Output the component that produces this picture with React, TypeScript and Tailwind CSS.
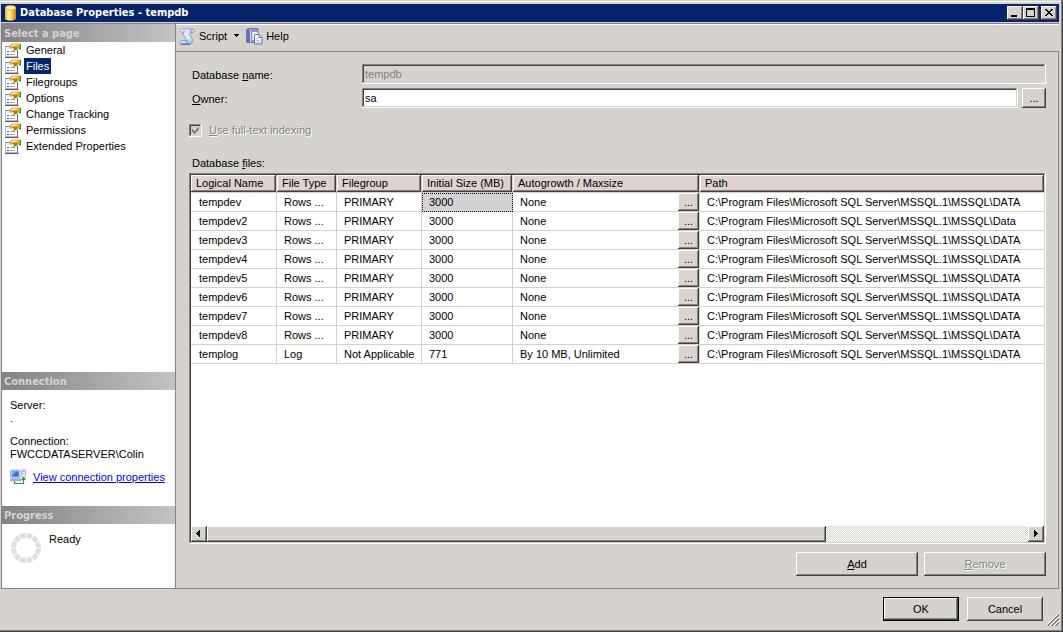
import React from 'react';

const RAISED =
  'bg-[#d6d3ce] shadow-[inset_-1px_-1px_0_#424142,inset_1px_1px_0_#ffffff,inset_-2px_-2px_0_#848284]';
const SUNKEN =
  'shadow-[inset_-1px_-1px_0_#ffffff,inset_1px_1px_0_#848284,inset_-2px_-2px_0_#d6d3ce,inset_2px_2px_0_#424142]';
const DISABLED_TEXT = 'text-[#848284] [text-shadow:1px_1px_0_#ffffff]';

const pages = [
  'General',
  'Files',
  'Filegroups',
  'Options',
  'Change Tracking',
  'Permissions',
  'Extended Properties',
];

type FileRow = {
  name: string;
  type: string;
  group: string;
  size: string;
  growth: string;
  path: string;
};

const DATA_PATH = 'C:\\Program Files\\Microsoft SQL Server\\MSSQL.1\\MSSQL\\DATA';

const dataRow = (name: string, path: string = DATA_PATH): FileRow => ({
  name,
  type: 'Rows ...',
  group: 'PRIMARY',
  size: '3000',
  growth: 'None',
  path,
});

const files: FileRow[] = [
  dataRow('tempdev'),
  dataRow('tempdev2', 'C:\\Program Files\\Microsoft SQL Server\\MSSQL.1\\MSSQL\\Data'),
  dataRow('tempdev3'),
  dataRow('tempdev4'),
  dataRow('tempdev5'),
  dataRow('tempdev6'),
  dataRow('tempdev7'),
  dataRow('tempdev8'),
  {
    name: 'templog',
    type: 'Log',
    group: 'Not Applicable',
    size: '771',
    growth: 'By 10 MB, Unlimited',
    path: DATA_PATH,
  },
];

const columns = ['Logical Name', 'File Type', 'Filegroup', 'Initial Size (MB)', 'Autogrowth / Maxsize', 'Path'];

function DatabaseIcon() {
  return (
    <svg width="14" height="16" viewBox="0 0 14 16" aria-hidden="true">
      <defs>
        <linearGradient id="cylinder" x1="0" x2="1" y1="0" y2="0">
          <stop offset="0" stopColor="#f0b020" />
          <stop offset="0.35" stopColor="#fff3b0" />
          <stop offset="0.65" stopColor="#f8c840" />
          <stop offset="1" stopColor="#c88400" />
        </linearGradient>
      </defs>
      <path d="M1 2.8v10.400c0 1.300 2.500 2.400 5.500 2.400s5.500-1.100 5.500-2.400V2.800z" fill="url(#cylinder)" />
      <ellipse cx="6.500" cy="2.800" rx="5.200" ry="2.200" fill="#fff0b0" stroke="#e0a830" strokeWidth="0.8" />
    </svg>
  );
}

function PageIcon() {
  return (
    <svg width="17" height="16" viewBox="0 0 17 16" aria-hidden="true">
      <rect x="0.5" y="4.5" width="12" height="10" fill="#ffffff" stroke="#b8b8d0" />
      <path d="M0 15.500h13.500" stroke="#50507c" />
      <path d="M12.500 8v7" stroke="#6c6c94" />
      <path d="M0 4.500h5" stroke="#8c8cac" />
      <g shapeRendering="crispEdges">
        <path d="M2 9.500h2M2 12.500h2" stroke="#5858b0" />
        <path d="M5 9.500h5M5 12.500h5" stroke="#98a0dc" />
      </g>
      <path d="M12.500 2.500l3.500-1v6.500l-3-2z" fill="#2f9a58" />
      <path d="M4.500 6.500l1-3 2.500-2 4-.7 2.500 1 .3 3.200-1.800 2.500-1.500.3-1.500 1.500-1.200-.8-.6-2.500-1.700-.3z" fill="#f5b428" />
      <path d="M6 3.500l2.500-1.700 3.500-.5 1.500.7-3.500 1.500-1.500 1.500z" fill="#ffe28a" />
      <path d="M4.500 6.500l1-3 2.500-2" fill="none" stroke="#a88850" strokeWidth="0.7" />
      <path d="M7 6.500l2-2M8.500 8.500l4-3.500M9.500 5l2 2.500" stroke="#54431c" strokeWidth="0.9" />
    </svg>
  );
}

function ScriptIcon() {
  return (
    <svg width="17" height="17" viewBox="0 0 17 17" aria-hidden="true">
      <defs>
        <linearGradient id="scroll" x1="0" x2="1" y1="0" y2="1">
          <stop offset="0" stopColor="#f4f8ff" />
          <stop offset="1" stopColor="#a0bce8" />
        </linearGradient>
      </defs>
      <path
        d="M3 1h10.500c1.500 0 2 1 2 2s-1 1.500-2 1.500h-2c-1 2 .5 3.500 1.500 5.500.8 1.800.8 3.500-.2 5-.6.8-1.300 1-2.300 1H2.500C1.300 16 .7 15.200.7 14.200s.8-1.700 1.800-1.700H7C6.500 10 4.500 8 4.200 5.500L4 4.500C2.500 4.500 1.500 4 1.500 2.700 1.500 1.700 2 1 3 1z"
        fill="url(#scroll)"
        stroke="#8098c8"
        strokeWidth="0.8"
      />
      <path d="M4 4.500c1 0 1.300-.8 1-1.800M11.500 4.500c0-1.500.5-2.500 2-3M7 12.500c1.500.3 1.500 2 .5 3" fill="none" stroke="#5070a8" strokeWidth="0.9" />
      <path d="M6.500 6.500h3M7.500 8.500h3M8.500 10.500h3" stroke="#ffffff" />
      <path d="M1.500 16c3 .5 7 .4 10 0" fill="none" stroke="#3858a0" />
    </svg>
  );
}

function HelpIcon() {
  return (
    <svg width="17" height="17" viewBox="0 0 17 17" aria-hidden="true">
      <path d="M.5 1.500L2 .5h10v12l-1.500 2H.5z" fill="#8c98cc" stroke="#5c68a4" strokeWidth="0.8" />
      <path d="M1 2h3v12H1z" fill="#6470b0" />
      <path d="M4.500 2v12" stroke="#d8dcf4" />
      <path d="M6 3.500h4.500l2 2v7H6z" fill="#ffffff" stroke="#7890bc" strokeWidth="0.8" />
      <path d="M8.500 6.500H13l3 3v6.500H8.500z" fill="#f4f9ff" stroke="#4868a0" strokeWidth="0.9" />
      <path d="M13 6.500v3h3" fill="#b8d0f0" stroke="#4868a0" strokeWidth="0.8" />
      <path d="M10 10.500h2M10 12.500h4.500M10 14.300h4.500" stroke="#a0bce4" strokeWidth="0.9" />
    </svg>
  );
}

function ConnectionIcon() {
  return (
    <svg width="17" height="16" viewBox="0 0 17 16" aria-hidden="true">
      <rect x="0.500" y="1" width="9.500" height="8" rx="0.800" fill="#d4def4" stroke="#98a8d0" strokeWidth="0.9" />
      <rect x="1.800" y="2.300" width="7" height="5.400" fill="#2878e8" />
      <path d="M2 2.500h4.500L2 6.500z" fill="#70b4ff" />
      <path d="M1 10h9.500l1 1.800H.5z" fill="#b4bcd8" stroke="#8490b8" strokeWidth="0.7" />
      <rect x="11.500" y="0.500" width="4" height="8" rx="0.800" fill="#e8ecf8" stroke="#a8b0c8" strokeWidth="0.9" />
      <path d="M12.500 2.500h2M12.500 4.500h2" stroke="#8898b8" strokeWidth="0.8" />
      <path d="M4.500 12v2.500h9V10" fill="none" stroke="#2c9828" strokeWidth="1.200" />
      <path d="M13.500 7.500l2.500 3.500h-5z" fill="#2c9828" />
    </svg>
  );
}

function ProgressIcon() {
  return (
    <svg width="32" height="32" viewBox="0 0 32 32" aria-hidden="true">
      <circle
        cx="16"
        cy="16"
        r="12.500"
        fill="none"
        stroke="#dedbe2"
        strokeWidth="5"
        pathLength={120}
        strokeDasharray="8.400 1.600"
        strokeDashoffset="-0.800"
      />
    </svg>
  );
}

function SectionHeader({ children }: { children: React.ReactNode }) {
  return (
    <h2 className="h-[18px] shrink-0 bg-linear-to-r from-[#848284] to-[#c6c3c6] pl-0.5 font-['DejaVu_Sans_Condensed','DejaVu_Sans',sans-serif] text-[11px] leading-[19px] font-bold text-[#d6d3ce]">
      {children}
    </h2>
  );
}

function TitleBar() {
  return (
    <header className="flex h-[18px] shrink-0 items-center bg-[#08246b] pr-0.5 pl-[3px]">
      <DatabaseIcon />
      <h1 className="flex-1 pl-0.5 font-['DejaVu_Sans_Condensed','DejaVu_Sans',sans-serif] text-[11px] leading-[18px] font-bold text-white">
        Database Properties - tempdb
      </h1>
      <button type="button" aria-label="Minimize" className={`h-3.5 w-4 ${RAISED}`}>
        <svg width="16" height="14" shapeRendering="crispEdges">
          <path d="M4 9h6v2H4z" />
        </svg>
      </button>
      <button type="button" aria-label="Maximize" className={`h-3.5 w-4 ${RAISED}`}>
        <svg width="16" height="14" shapeRendering="crispEdges">
          <path d="M3 2h9v9H3zM4 4v6h7V4z" fillRule="evenodd" />
        </svg>
      </button>
      <button type="button" aria-label="Close" className={`ml-0.5 h-3.5 w-4 ${RAISED}`}>
        <svg width="16" height="14" shapeRendering="crispEdges">
          <path d="M4 3h2v1h1v1h2V4h1V3h2v1h-1v1h-1v1H9v1h1v1h1v1h1v1h-2V9H9V8H7v1H6v1H4V9h1V8h1V7h1V6H6V5H5V4H4z" />
        </svg>
      </button>
    </header>
  );
}

function Sidebar() {
  return (
    <aside className="flex w-[175px] shrink-0 flex-col border-x border-b border-[#848284] bg-white">
      <SectionHeader>Select a page</SectionHeader>
      <nav className="flex-1">
        <ul>
          {pages.map((page) => (
            <li key={page} className="flex h-4 items-center gap-0.5 pl-[3px]">
              <PageIcon />
              <a
                href="#"
                className={
                  page === 'Files'
                    ? 'bg-[#08246b] px-0.5 leading-4 text-white'
                    : 'px-0.5 leading-4'
                }
              >
                {page}
              </a>
            </li>
          ))}
        </ul>
      </nav>
      <SectionHeader>Connection</SectionHeader>
      <div className="h-[116px] px-2 pt-[9px] leading-[13px]">
        <p>Server:</p>
        <p>.</p>
        <p className="mt-2.5">Connection:</p>
        <p>FWCCDATASERVER\Colin</p>
        <div className="mt-2 flex items-center gap-1.5">
          <ConnectionIcon />
          <a href="#" className="text-[#0000ff] underline">
            View connection properties
          </a>
        </div>
      </div>
      <SectionHeader>Progress</SectionHeader>
      <div className="flex h-16 gap-[7px] pt-2 pl-2">
        <ProgressIcon />
        <p className="leading-[14px]">Ready</p>
      </div>
    </aside>
  );
}

function FilesTable() {
  return (
    <div className={`flex flex-1 flex-col bg-white p-0.5 ${SUNKEN}`}>
      <div className="flex-1 overflow-hidden">
        <table aria-labelledby="files-label" className="w-full table-fixed border-separate border-spacing-0">
          <colgroup>
            <col className="w-[86px]" />
            <col className="w-[60px]" />
            <col className="w-[85px]" />
            <col className="w-[91px]" />
            <col className="w-[187px]" />
            <col />
          </colgroup>
          <thead>
            <tr>
              {columns.map((column) => (
                <th
                  key={column}
                  scope="col"
                  className="h-[18px] border-b border-[#d6cfce] bg-[#ded3ce] p-0 pl-[5px] text-left leading-[17px] font-normal whitespace-nowrap shadow-[inset_-1px_-1px_0_#424142,inset_1px_1px_0_#ffffff,inset_-2px_-2px_0_#848284] not-last:border-r"
                >
                  {column}
                </th>
              ))}
            </tr>
          </thead>
          <tbody>
            {files.map((file, index) => (
              <tr
                key={file.name}
                className="h-[19px] leading-[18px] whitespace-nowrap *:border-b *:border-[#d6cfce] *:p-0 *:pl-[7px] *:first:pl-2 *:not-last:border-r"
              >
                <td>{file.name}</td>
                <td>{file.type}</td>
                <td>{file.group}</td>
                <td
                  className={
                    index === 0 ? 'bg-[#d6d3d6] outline-1 -outline-offset-1 outline-black outline-dotted' : ''
                  }
                >
                  {file.size}
                </td>
                <td>
                  <div className="flex items-center justify-between">
                    <span>{file.growth}</span>
                    <button
                      type="button"
                      aria-label={`Change autogrowth for ${file.name}`}
                      className="h-[18px] w-[21px] bg-[#ded3ce] leading-[18px] shadow-[inset_-1px_-1px_0_#424142,inset_1px_1px_0_#ffffff,inset_-2px_-2px_0_#848284]"
                    >
                      ...
                    </button>
                  </div>
                </td>
                <td className="overflow-hidden">{file.path}</td>
              </tr>
            ))}
          </tbody>
        </table>
      </div>
      <div className="flex h-4 bg-[repeating-conic-gradient(#ffffff_0_25%,#d6d3ce_0_50%)] bg-size-[2px_2px]">
        <button type="button" aria-label="Scroll left" className={`w-4 ${RAISED}`}>
          <svg width="16" height="16" shapeRendering="crispEdges">
            <path d="M5 7h1V6h1V5h1V4h1v7H8v-1H7V9H6V8H5z" />
          </svg>
        </button>
        <div className="flex flex-1">
          <div className={`w-[75.4%] ${RAISED}`} />
        </div>
        <button type="button" aria-label="Scroll right" className={`w-4 ${RAISED}`}>
          <svg width="16" height="16" shapeRendering="crispEdges">
            <path d="M6 4h1v1h1v1h1v1h1v1H9v1H8v1H7v1H6z" />
          </svg>
        </button>
      </div>
    </div>
  );
}

function MainPanel() {
  return (
    <main className="flex min-w-0 flex-1 flex-col">
      <div role="toolbar" className="flex h-[27px] items-center border-t border-white pb-1 pl-[3px]">
        <button type="button" className="flex items-center gap-[3px]">
          <ScriptIcon />
          <span>Script</span>
          <svg width="11" height="4" shapeRendering="crispEdges" aria-hidden="true">
            <path d="M4 0h5v1H8v1H7v1H6V2H5V1H4z" />
          </svg>
        </button>
        <button type="button" className="ml-[5px] flex items-center gap-[3px]">
          <HelpIcon />
          <span>Help</span>
        </button>
      </div>
      <div className="flex flex-1 flex-col border-t border-r border-b border-[#848284] pt-3 pr-3 pb-3 pl-[13px]">
        <div className="grid grid-cols-[170px_1fr] items-center gap-x-[3px] gap-y-1">
          <label htmlFor="database-name" className="pt-0.5 pl-[3px]">
            Database <u>n</u>ame:
          </label>
          <input
            id="database-name"
            disabled
            defaultValue="tempdb"
            className={`h-5 w-full bg-[#d6d3ce] px-[3px] text-[#848284] ${SUNKEN}`}
          />
          <label htmlFor="owner" className="pt-0.5 pl-[3px]">
            <u>O</u>wner:
          </label>
          <div className="flex gap-1">
            <input id="owner" defaultValue="sa" className={`h-5 min-w-0 flex-1 bg-white px-[3px] ${SUNKEN}`} />
            <button type="button" aria-label="Browse for owner" className={`h-5 w-6 ${RAISED}`}>
              ...
            </button>
          </div>
        </div>
        <div className="mt-3.5 flex h-4 items-center gap-[7px]">
          <span className="relative flex">
            <input
              id="full-text"
              type="checkbox"
              defaultChecked
              disabled
              className={`size-[13px] appearance-none bg-[#d6d3ce] ${SUNKEN}`}
            />
            <svg className="pointer-events-none absolute inset-0" width="13" height="13" shapeRendering="crispEdges" aria-hidden="true">
              <path d="M3 5h1v1h1v1h1V6h1V5h1V4h1V3h1v3H9v1H8v1H7v1H6v1H5V9H4V8H3z" fill="#848284" />
            </svg>
          </span>
          <label htmlFor="full-text" className={DISABLED_TEXT}>
            <u>U</u>se full-text indexing
          </label>
        </div>
        <p id="files-label" className="mt-[17px] mb-0.5 pl-[3px] leading-4">
          Database <u>f</u>iles:
        </p>
        <FilesTable />
        <div className="mt-2 flex justify-end gap-1.5">
          <button type="button" className={`h-6 w-[122px] ${RAISED}`}>
            <u>A</u>dd
          </button>
          <button type="button" disabled className={`h-6 w-[122px] ${RAISED} ${DISABLED_TEXT}`}>
            <u>R</u>emove
          </button>
        </div>
      </div>
    </main>
  );
}

export default function App() {
  return (
    <div className="flex min-h-screen flex-col bg-[#d6d3ce] pt-1 pr-1 pb-0.5 pl-px font-['Liberation_Sans',Arial,sans-serif] text-[11px] leading-[14px] text-black shadow-[inset_-1px_-1px_0_#424142,inset_-2px_-2px_0_#848284,inset_0_1px_0_#d6d3ce,inset_0_2px_0_#ffffff]">
      <TitleBar />
      <div className="mt-px flex flex-1 border-t border-[#848284]">
        <Sidebar />
        <MainPanel />
      </div>
      <footer className="relative flex h-[41px] shrink-0 items-start justify-end gap-2 pt-2 pr-4">
        <button
          type="button"
          className="h-6 w-[76px] border border-black bg-[#d6d3ce] shadow-[inset_-1px_-1px_0_#424142,inset_1px_1px_0_#ffffff,inset_-2px_-2px_0_#848284]"
        >
          OK
        </button>
        <button type="button" className={`h-6 w-[76px] ${RAISED}`}>
          Cancel
        </button>
        <svg className="absolute right-0 bottom-1" width="13" height="13" aria-hidden="true">
          <path d="M0 13L13 0M4 13l9-9M8 13l5-5" stroke="#ffffff" />
          <path d="M1 13L13 1M2 13L13 2M5 13l8-8M6 13l7-7M9 13l4-4M10 13l3-3" stroke="#848284" />
        </svg>
      </footer>
    </div>
  );
}
